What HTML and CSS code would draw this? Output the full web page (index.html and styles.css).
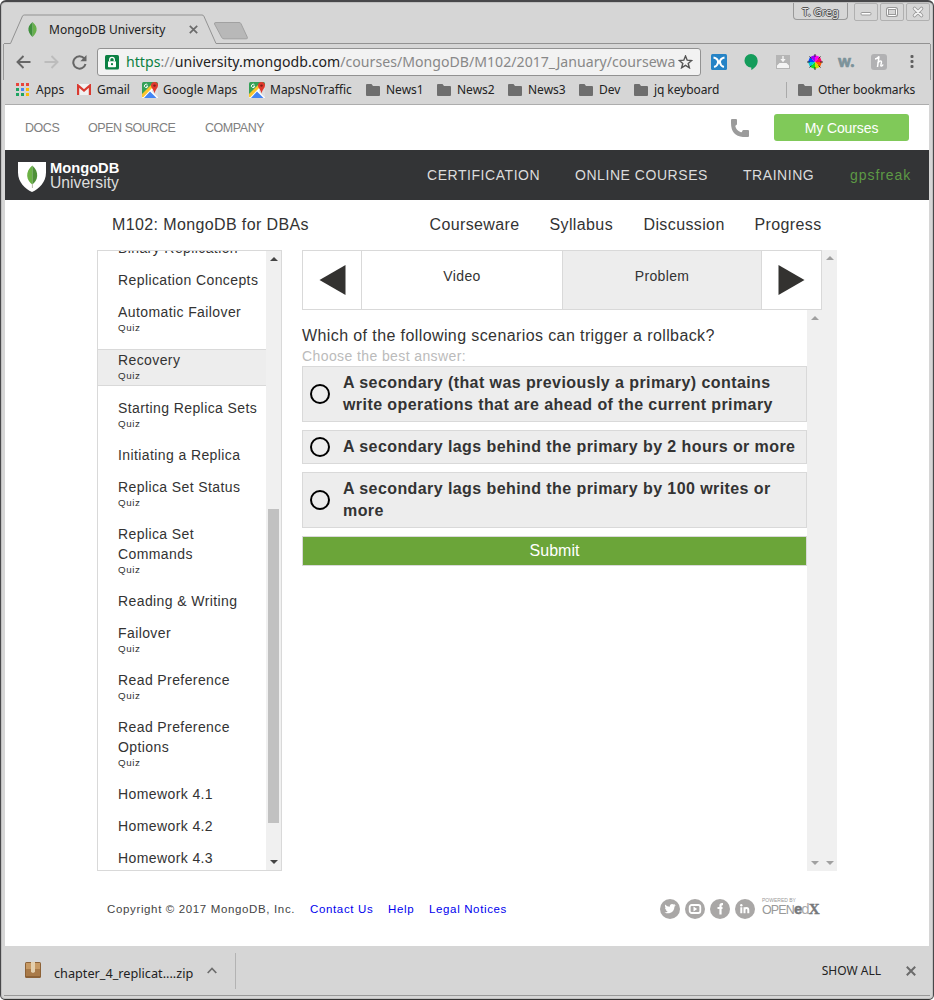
FILE: index.html
```html
<!DOCTYPE html>
<html lang="en">
<head>
<meta charset="utf-8">
<title>MongoDB University</title>
<link rel="stylesheet" href="styles.css">
</head>
<body>
<svg class="defs" width="0" height="0">
  <defs>
    <symbol id="folder" viewBox="0 0 14 12"><path fill="#6e6e6e" d="M1 0h4.500L7 2h6q1 0 1 1v8q0 1-1 1H1q-1 0-1-1V1q0-1 1-1z"/></symbol>
    <symbol id="maps" viewBox="0 0 16 16">
      <rect width="16" height="16" rx="1.500" fill="#34a057"/>
      <path fill="#fff" d="M0 14 13 1l3 3v12H0z"/>
      <path fill="#fbc52d" d="M0 12 11 1l1 3L1 15.500 0 15z"/>
      <path fill="#4285f4" d="M2 16 8 9.500 14.500 16z"/>
      <path fill="#dedede" d="M9.500 9 16 4v11.500z"/>
      <path fill="#e0392e" d="M12.500 0A3.600 3.600 0 0 1 16 3.600C16 6 13.500 7.500 12.500 11.500 11.500 7.500 9 6 9 3.600A3.600 3.600 0 0 1 12.500 0z"/>
      <circle cx="12.500" cy="3.600" r="1.200" fill="#7d2018"/>
      <path fill="none" stroke="#fff" stroke-width="1" d="M5.500 2.900a1.700 1.700 0 1 0 .3 1.300H4.200"/>
    </symbol>
  </defs>
</svg>
<div class="window">
  <header class="titlebar">
    <svg class="tab-outline" width="926" height="44" viewBox="4 0 926 44">
      <path d="M4 43.500h6.500L22.500 16q.6-1 1.800-1H202q1.300 0 1.800 1L216 43.500H930" fill="none" stroke="#929292"/>
      <path d="M216 22.500h23q1.500 0 2 1.200l6.300 13.500q.6 1.600-1 1.600H224q-1.700 0-2.200-1.200L214.500 24q-.5-1.500 1.500-1.500z" fill="#b8b8b8" stroke="#a1a1a1"/>
    </svg>
    <div class="tab">
      <svg width="9" height="15" viewBox="0 0 9 15"><path fill="#67b04b" d="M4.500 0C8 3 9 5.500 8.500 8.500 8 11.500 6 13.500 4.500 15z"/><path fill="#3e8f3c" d="M4.500 0C1 3 0 5.500.5 8.500 1 11.500 3 13.500 4.500 15z"/></svg>
      <span class="tab-title">MongoDB University</span>
      <svg width="9" height="9" viewBox="0 0 9 9"><path d="M.8.8l7.400 7.400M8.200.8.8 8.200" stroke="#6b6b6b" stroke-width="1.700"/></svg>
    </div>
    <div class="win-buttons">
      <span class="user">T. Greg</span>
      <span class="wb"><svg width="22" height="16"><rect x="6" y="8.500" width="10" height="2.500" rx="1" fill="#fff" stroke="#999"/></svg></span>
      <span class="wb"><svg width="22" height="16"><rect x="6.500" y="4.500" width="9" height="7" rx="1" fill="none" stroke="#999" stroke-width="3"/><rect x="6.500" y="4.500" width="9" height="7" rx="1" fill="none" stroke="#fff"/></svg></span>
      <span class="wb"><svg width="22" height="16"><path d="M7.500 4.500l7 7M14.500 4.500l-7 7" stroke="#999" stroke-width="3.600" stroke-linecap="round"/><path d="M7.500 4.500l7 7M14.500 4.500l-7 7" stroke="#f4f4f4" stroke-width="1.800" stroke-linecap="round"/></svg></span>
    </div>
  </header>
  <div class="toolbar">
    <svg width="15" height="14" viewBox="0 0 15 14"><path d="M14.500 7H1.500M7.500 1 1.500 7l6 6" fill="none" stroke="#666" stroke-width="1.900"/></svg>
    <svg class="forward" width="15" height="14" viewBox="0 0 15 14"><path d="M.5 7h13M7.500 1l6 6-6 6" fill="none" stroke="#bcbcbc" stroke-width="1.900"/></svg>
    <svg class="reload" width="15" height="15" viewBox="0 0 15 15"><path d="M12.300 3.500A6.200 6.200 0 1 0 13.500 9" fill="none" stroke="#666" stroke-width="2"/><path d="M14.500 0v6.200H8.300z" fill="#666"/></svg>
    <div class="address">
      <svg width="14" height="15" viewBox="0 0 14 15"><rect width="14" height="14.500" rx="1.500" fill="#0b8043"/><rect x="3" y="6.200" width="8" height="6" rx=".8" fill="#fff"/><path d="M4.700 6V4.600a2.300 2.300 0 0 1 4.600 0V6" fill="none" stroke="#fff" stroke-width="1.300"/><circle cx="7" cy="9.200" r="1.100" fill="#0b8043"/></svg>
      <span class="url"><span class="secure">https</span>://<span class="host">university.mongodb.com</span>/courses/MongoDB/M102/2017_January/coursewa</span>
      <svg width="15" height="14" viewBox="0 0 15 14"><path d="M7.500 1l1.700 4.200 4.500.3-3.500 2.900 1.200 4.400-3.900-2.400-3.900 2.400 1.200-4.400L1.300 5.500l4.500-.3z" fill="none" stroke="#555" stroke-width="1.400"/></svg>
    </div>
    <div class="extensions">
      <svg width="16" height="16" viewBox="0 0 16 16"><rect width="16" height="16" rx="1.500" fill="#2583c6"/><path d="M2.500 3.500q4.200.7 4.600 4.500-.4 3.800-4 5M13.500 3.500Q9.300 4.200 8.900 8q.4 3.800 4 5" fill="none" stroke="#fff" stroke-width="2"/><path fill="#fff" d="M7 6.500h2v3H7z"/></svg>
      <svg width="14" height="16" viewBox="0 0 14 16"><path fill="#149c5b" d="M7 0a6.700 6.700 0 0 1 6.700 6.700C13.700 11 11 14 7.300 16v-2.600A6.700 6.700 0 1 1 7 0z"/></svg>
      <svg width="14" height="14" viewBox="0 0 14 14"><rect width="14" height="14" fill="#b5b5b5"/><path fill="#f4f4f4" d="M1 13v-2.500L3.500 8h7l2.500 2.500V13zM6.300 1h1.400v3h2L7 7.300 4.300 4h2z"/></svg>
      <svg width="16" height="16" viewBox="-8 -8 16 16">
        <path fill="#f0e" d="M0 0V-7L5-5z"/><path fill="#f06" d="M0 0 5-5 7 0z"/><path fill="#ff5a00" d="M0 0H7L5 5z"/><path fill="#cfe000" d="M0 0 5 5 0 7z"/><path fill="#1d2" d="M0 0V7L-5 5z"/><path fill="#0cd" d="M0 0-5 5-7 0z"/><path fill="#04f" d="M0 0H-7L-5-5z"/><path fill="#90f" d="M0 0-5-5 0-7z"/>
        <path d="M0-8v3M0 8V5M-8 0h3M8 0H5M-5.500-5.500l2 2M5.500 5.500l-2-2M-5.500 5.500l2-2M5.500-5.500l-2 2" stroke="#333"/>
      </svg>
      <span class="w-ext">w.</span>
      <svg width="16" height="16" viewBox="0 0 16 16"><rect width="16" height="16" rx="3" fill="#b1b1b3"/><path d="M4 5q2.500-.2 4-2.500L6.500 13M6.500 9.500Q9 6 10.300 7.200c1 1-1.300 4-.2 4.800q1 .4 2-1.500" fill="none" stroke="#fff" stroke-width="1.500"/></svg>
      <svg width="4" height="14" viewBox="0 0 4 14"><g fill="#606060"><rect x=".5" y="0" width="3" height="3" rx="1"/><rect x=".5" y="5" width="3" height="3" rx="1"/><rect x=".5" y="10" width="3" height="3" rx="1"/></g></svg>
    </div>
  </div>
  <nav class="bookmarks">
    <span class="bm b-apps"><svg width="13" height="13" viewBox="0 0 13 13"><g fill="#e8453c"><path d="M0 0h3v3H0zM5 0h3v3H5zM10 0h3v3h-3z"/></g><path fill="#1fa463" d="M0 5h3v3H0zM0 10h3v3H0zM5 10h3v3H5z"/><path fill="#4688f1" d="M5 5h3v3H5z"/><path fill="#fbbc05" d="M10 5h3v3h-3zM10 10h3v3h-3z"/></svg>Apps</span>
    <span class="bm b-gmail"><svg width="14" height="11" viewBox="0 0 14 11"><rect width="14" height="11" rx="1" fill="#f1f1f1"/><path d="M1.100 11V1.500L7 6.500l5.900-5V11" fill="none" stroke="#d93a30" stroke-width="2.200"/></svg>Gmail</span>
    <span class="bm b-maps"><svg width="16" height="16"><use href="#maps"/></svg>Google Maps</span>
    <span class="bm b-mnt"><svg width="16" height="16"><use href="#maps"/></svg>MapsNoTraffic</span>
    <span class="bm b-news"><svg width="14" height="12"><use href="#folder"/></svg>News1</span>
    <span class="bm b-news"><svg width="14" height="12"><use href="#folder"/></svg>News2</span>
    <span class="bm b-news"><svg width="14" height="12"><use href="#folder"/></svg>News3</span>
    <span class="bm b-dev"><svg width="14" height="12"><use href="#folder"/></svg>Dev</span>
    <span class="bm b-jq"><svg width="14" height="12"><use href="#folder"/></svg>jq keyboard</span>
    <span class="bm b-other"><svg width="14" height="12"><use href="#folder"/></svg>Other bookmarks</span>
  </nav>
  <main class="page">
    <div class="topnav">
      <a class="t-docs">DOCS</a><a class="t-open">OPEN SOURCE</a><a class="t-comp">COMPANY</a>
      <svg width="18" height="18" viewBox="0 0 18 18"><path fill="#9b9b9b" d="M1 0h4q1 0 1 1v4q0 1-1 1.200-.9.300-.6 1.300.9 3.800 5 5.500 1.500.7 1.700-.5.200-1.500 1.300-1.500H17q1 0 1 1v5q0 1-1 1h-5Q0 17 0 4V1q0-1 1-1z"/></svg>
      <a class="my-courses">My Courses</a>
    </div>
    <div class="mainnav">
      <svg class="shield" width="28" height="30" viewBox="0 0 28 30"><path fill="#fff" d="M0 0h28v10.500C28 20 21 27 14 30 7 27 0 20 0 10.500z"/><path fill="#6bb144" d="M14.300 3.500C10.500 7 9 10 9.200 14c.2 4 2.700 6.500 5.100 8.500z"/><path fill="#4f9038" d="M14.300 3.500C18 7 19.400 10 19.200 14c-.2 4-2.600 6.500-4.900 8.500z"/><path d="M14.400 22v4" stroke="#b9b9a8"/></svg>
      <div class="brand"><b>MongoDB</b><span>University</span></div>
      <a class="m-cert">CERTIFICATION</a><a class="m-online">ONLINE COURSES</a><a class="m-train">TRAINING</a><a class="m-user">gpsfreak</a>
    </div>
    <div class="coursenav">
      <span class="c-title">M102: MongoDB for DBAs</span><a class="c-a">Courseware</a><a class="c-b">Syllabus</a><a class="c-c">Discussion</a><a class="c-d">Progress</a>
    </div>
    <div class="course">
      <aside class="sidebar">
        <div class="lessons">
          <div class="lesson">Binary Replication</div>
          <div class="lesson">Replication Concepts</div>
          <div class="lesson">Automatic Failover<small>Quiz</small></div>
          <div class="lesson current">Recovery<small>Quiz</small></div>
          <div class="lesson">Starting Replica Sets<small>Quiz</small></div>
          <div class="lesson">Initiating a Replica</div>
          <div class="lesson">Replica Set Status<small>Quiz</small></div>
          <div class="lesson">Replica Set<br>Commands<small>Quiz</small></div>
          <div class="lesson">Reading &amp; Writing</div>
          <div class="lesson">Failover<small>Quiz</small></div>
          <div class="lesson">Read Preference<small>Quiz</small></div>
          <div class="lesson">Read Preference<br>Options<small>Quiz</small></div>
          <div class="lesson">Homework 4.1</div>
          <div class="lesson">Homework 4.2</div>
          <div class="lesson">Homework 4.3</div>
        </div>
        <div class="scroll dark"><i class="up"></i><i class="thumb"></i><i class="down"></i></div>
      </aside>
      <section class="unit">
        <div class="unit-main">
          <div class="seq">
            <span class="seq-arrow prev"><svg width="27" height="30" viewBox="0 0 27 30"><path fill="#333230" d="M26.500 0v30L.5 15z"/></svg></span>
            <span class="seq-tab">Video</span>
            <span class="seq-tab active">Problem</span>
            <span class="seq-arrow next"><svg width="27" height="30" viewBox="0 0 27 30"><path fill="#333230" d="M.5 0v30l26-15z"/></svg></span>
          </div>
          <div class="problem-row">
            <div class="problem">
              <p class="question">Which of the following scenarios can trigger a rollback?</p>
              <p class="hint">Choose the best answer:</p>
              <label class="option"><i class="radio"></i><b>A secondary (that was previously a primary) contains<br>write operations that are ahead of the current primary</b></label>
              <label class="option"><i class="radio"></i><b>A secondary lags behind the primary by 2 hours or more</b></label>
              <label class="option"><i class="radio"></i><b>A secondary lags behind the primary by 100 writes or<br>more</b></label>
              <div class="submit">Submit</div>
            </div>
            <div class="scroll"><i class="up"></i><i class="down"></i></div>
          </div>
        </div>
        <div class="scroll"><i class="up"></i><i class="down"></i></div>
      </section>
    </div>
    <footer class="footer">
      <span class="f-copy">Copyright © 2017 MongoDB, Inc.</span><a class="f-contact">Contact Us</a><a class="f-help">Help</a><a class="f-legal">Legal Notices</a>
      <div class="social">
        <svg width="20" height="20" viewBox="0 0 20 20"><circle cx="10" cy="10" r="10" fill="#a9a7a6"/><path fill="#fff" d="M15.800 6.300l-1.400 1.500c.1 4.700-4.700 8.300-9.900 5.700 1.400 0 2.500-.4 3.300-1.100-1.100-.1-1.800-.7-2.100-1.600h1C5.500 10.400 5 9.500 5 8.400l.9.300C4.900 7.800 4.700 6.500 5.300 5.500c1.200 1.400 2.600 2.200 4.500 2.300-.4-2.500 2.400-3.700 3.900-2.200l1.500-.6-.9 1.300z"/></svg>
        <svg width="20" height="20" viewBox="0 0 20 20"><circle cx="10" cy="10" r="10" fill="#a9a7a6"/><rect x="4.700" y="6" width="10.600" height="8" rx="2" fill="none" stroke="#fff" stroke-width="1.800"/><path fill="#fff" d="M8.500 7.500v5l3.700-2.500z"/></svg>
        <svg width="20" height="20" viewBox="0 0 20 20"><circle cx="10" cy="10" r="10" fill="#a9a7a6"/><path d="M13 5.200h-1q-1.500 0-1.500 1.500V15.500M7.500 9h5" fill="none" stroke="#fff" stroke-width="2.200"/></svg>
        <svg width="20" height="20" viewBox="0 0 20 20"><circle cx="10" cy="10" r="10" fill="#a9a7a6"/><path d="M6.300 8.300v5.900M9.500 14.200V8.300M9.500 10.500q.4-1.400 2-1.400 1.800 0 1.800 2v3.100" fill="none" stroke="#fff" stroke-width="2"/><circle cx="6.300" cy="6.200" r="1.200" fill="#fff"/></svg>
      </div>
      <div class="edx"><small>POWERED BY</small><div><span>OPEN</span><b><i>e</i><i class="d">d</i><i class="x">X</i></b></div></div>
    </footer>
  </main>
  <div class="downloads">
    <svg class="box" width="16" height="16" viewBox="0 0 16 16"><rect width="16" height="16" rx="1.500" fill="#8d6237"/><path fill="#c79a64" d="M1 1h14v6H1z"/><path fill="#a97a48" d="M1 7h14v7H1z"/><path fill="#e3cfae" d="M6 0h4v10l-2 1-2-1z"/></svg>
    <span class="file">chapter_4_replicat....zip</span>
    <svg width="10" height="7" viewBox="0 0 10 7"><path d="M.7 6 5 1.500 9.300 6" fill="none" stroke="#6e6e6e" stroke-width="1.700"/></svg>
    <span class="divider"></span>
    <span class="show-all">SHOW ALL</span>
    <svg width="10" height="10" viewBox="0 0 10 10"><path d="M.8.8l8.400 8.400M9.200.8.8 9.200" stroke="#6b6b6b" stroke-width="2"/></svg>
  </div>
</div>
</body>
</html>
```
FILE: styles.css
```css
* { box-sizing: border-box; }
body { margin: 0; background: #fff; font-family: "Liberation Sans", Arial, sans-serif; color: #333; }
svg { display: block; flex: none; }
.defs { position: absolute; }
.window {
  width: 934px; height: 1000px; display: flex; flex-direction: column;
  border: 1px solid #48484a; border-top-width: 2px; border-bottom: 1px solid #333; border-radius: 6px 6px 5px 5px;
  background: #d6d6d6; padding: 0 3px 2px; overflow: hidden; box-shadow: inset 0 0 0 1px #c0c0c0;
  white-space: nowrap;
}
.titlebar, .toolbar, .bookmarks, .downloads { font-family: "Noto Sans", sans-serif; color: #222; }
.titlebar { position: relative; height: 42px; flex: none; display: flex; justify-content: space-between; }
.tab-outline { position: absolute; left: 0; top: -2px; }
.tab { display: flex; align-items: center; padding: 13px 0 0 24px; height: 42px; font-size: 12px; position: relative; }
.tab-title { width: 140px; margin-left: 12px; }
.win-buttons { display: flex; padding-top: 1px; margin-right: -2px; position: relative; }
.user {
  width: 55px; height: 17px; margin-right: 6px; border: 1px solid #999; border-top: 0; border-radius: 0 0 4px 4px;
  font-size: 11px; line-height: 17px; text-align: center; color: #e4e4e4;
  text-shadow: 1px 0 #555, -1px 0 #555, 0 1px #555, 0 -1px #555;
}
.wb { width: 24px; height: 18px; border: 1px solid #b0b0b0; border-radius: 2px; margin-right: 2px; }
.toolbar { height: 36px; flex: none; display: flex; align-items: center; border-left: 1px solid #999; border-right: 1px solid #999; margin: 0 -1px; padding-left: 12px; }
.forward { margin-left: 13px; }
.reload { margin-left: 13px; }
.address { display: flex; align-items: center; width: 604px; height: 28px; margin-left: 10px; background: #f2f2f2; border: 1px solid #929292; border-radius: 3px; padding-left: 7px; }
.url { font-size: 14.100px; letter-spacing: .02px; width: 552px; margin-left: 7px; color: #888; overflow: hidden; line-height: 24px; }
.secure { color: #0b8043; }
.host { color: #222; }
.extensions { display: flex; align-items: center; margin-left: 10px; }
.extensions > :nth-child(2) { margin-left: 17px; }
.extensions > :nth-child(3) { margin-left: 18px; }
.extensions > :nth-child(4) { margin-left: 17px; }
.w-ext { width: 18px; margin: 0 0 2px 15px; color: #7c929a; font: 900 16px/16px "Lato", sans-serif; -webkit-text-stroke: .7px #7c929a; }
.extensions > :nth-child(6) { margin-left: 15px; }
.extensions > :nth-child(7) { margin-left: 23px; }
.bookmarks { display: flex; align-items: center; height: 25px; flex: none; font-size: 12px; padding: 0 0 5px 11px; border-bottom: 1px solid #adadad; margin: 0 1px; }
.bm { display: flex; align-items: center; gap: 6px; height: 20px; }
.b-apps { width: 61px; gap: 7px; }
.b-gmail { width: 65px; }
.b-maps { width: 107px; gap: 5px; }
.b-mnt { width: 117px; gap: 5px; }
.b-news { width: 71px; }
.b-dev { width: 55px; }
.b-jq { width: 152px; letter-spacing: -.08px; }
.b-other { height: 16px; border-left: 1px solid #aaa; padding-left: 11px; letter-spacing: -.15px; }

.page { height: 841px; flex: none; background: #fff; display: flex; flex-direction: column; margin: 0 1px; }
.topnav { display: flex; align-items: center; height: 45px; flex: none; padding-left: 20px; font-size: 12.500px; letter-spacing: -.45px; color: #808080; }
.t-docs { width: 63px; }
.t-open { width: 117px; }
.t-comp { width: 526px; }
.my-courses { width: 135px; height: 27px; margin-left: 25px; border-radius: 3px; background: #80c959; color: #fff; font-size: 14px; letter-spacing: -.1px; line-height: 28px; text-align: center; }
.mainnav { display: flex; align-items: center; height: 50px; flex: none; background: #333436; color: #dcdcdc; padding-left: 13px; font-size: 14px; letter-spacing: .55px; }
.shield { margin-top: 4px; }
.brand { display: flex; flex-direction: column; width: 377px; margin-left: 4px; font-size: 15px; line-height: 15px; color: #fff; letter-spacing: 0; padding-top: 1px; }
.brand b { font-size: 14.700px; line-height: 14px; }
.brand span { color: #ddd; font-size: 15.700px; }
.m-cert { width: 148px; }
.m-online { width: 168px; }
.m-train { width: 107px; }
.m-user { color: #5d9a45; letter-spacing: .95px; }
.coursenav { display: flex; align-items: center; height: 50px; flex: none; padding-left: 107px; font-size: 16px; letter-spacing: .38px; }
.c-title { width: 317.500px; }
.c-a { width: 120px; }
.c-b { width: 94px; }
.c-c { width: 111px; }
.course { display: flex; height: 621px; flex: none; padding-left: 92px; }
.sidebar { display: flex; width: 185px; border: 1px solid #d9d9d9; overflow: hidden; }
.lessons { flex: 1; margin-top: -13px; font-size: 14px; letter-spacing: .4px; line-height: 20px; }
.lesson { padding-left: 20px; margin-bottom: 12px; }
.lesson small { display: block; font-size: 9.800px; letter-spacing: .55px; line-height: 12px; height: 15px; }
.current { background: #ededed; border: solid #d9d9d9; border-width: 1px 0; }
.scroll { width: 15px; flex: none; background: #f0f0f0; display: flex; flex-direction: column; align-items: center; padding: 6px 0; }
.scroll i { width: 0; height: 0; border: 4px solid transparent; color: #a0a0a0; }
.dark i { color: #444; }
.scroll .up { border-bottom-color: currentColor; border-top: 0; }
.scroll .down { border-top-color: currentColor; border-bottom: 0; margin-top: auto; }
.scroll .thumb { width: 11px; height: 314px; border: 0; background: #c1c1c1; margin-top: 248px; }
.unit { display: flex; margin-left: 20px; width: 535px; }
.unit-main { width: 520px; display: flex; flex-direction: column; }
.seq { display: flex; height: 60px; flex: none; border: 1px solid #d9d9d9; font-size: 14px; letter-spacing: .35px; }
.seq-arrow { width: 59px; padding: 14px 0 0 16px; }
.prev { border-right: 1px solid #d9d9d9; }
.seq-tab { width: 200px; text-align: center; line-height: 50px; }
.active { background: #ededed; border: solid #d9d9d9; border-width: 0 1px; }
.problem-row { display: flex; flex: 1; }
.problem { width: 505px; padding-top: 15px; display: flex; flex-direction: column; }
.question { margin: 0; font-size: 16px; line-height: 22px; letter-spacing: .4px; }
.hint { margin: 0; font-size: 14px; line-height: 19px; letter-spacing: .4px; color: #bbb; }
.option { display: flex; align-items: center; border: 1px solid #d9d9d9; background: #ededed; margin-bottom: 8px; padding: 5px 0 5px 7px; font-size: 16px; line-height: 22px; letter-spacing: .42px; }
.radio { width: 20px; height: 20px; border: 2px solid #000; border-radius: 50%; margin-right: 13px; }
.submit { height: 30px; border: 1px solid #d9d9d9; background: #6ba539; color: #fff; font-size: 16px; line-height: 28px; text-align: center; }
.footer { display: flex; align-items: center; height: 75px; padding-left: 102px; font-size: 11.500px; letter-spacing: .64px; color: #444; }
.footer a { color: #00e; }
.f-copy { width: 203px; }
.f-contact { width: 78px; }
.f-help { width: 41px; }
.f-legal { width: 231px; }
.social { display: flex; gap: 5px; }
.edx { margin-left: 7px; letter-spacing: 0; color: #999; width: 60px; }
.edx small { display: block; font-size: 5px; line-height: 5px; margin-top: -3px; }
.edx div { display: flex; align-items: baseline; line-height: 11px; font-size: 12.500px; }
.edx span { letter-spacing: -.9px; width: 32px; }
.edx b { color: #77787b; font-size: 15px; letter-spacing: -1px; -webkit-text-stroke: .4px #77787b; }
.edx i { font-style: normal; }
.edx .d { font-weight: 400; color: #aaa; -webkit-text-stroke: 0; }
.edx .x { font-family: "Liberation Serif", serif; }

.downloads { display: flex; align-items: center; height: 50px; flex: none; padding: 0 14px 0 21px; font-size: 12px; border-bottom: 1px solid #999; }
.box { margin-top: -2px; }
.file { width: 139px; margin: 4px 14px 0 13px; font-size: 12.700px; }
.divider { width: 1px; height: 36px; margin-left: 18px; background: #b3b3b3; }
.show-all { margin: 0 25px 0 auto; }
```
